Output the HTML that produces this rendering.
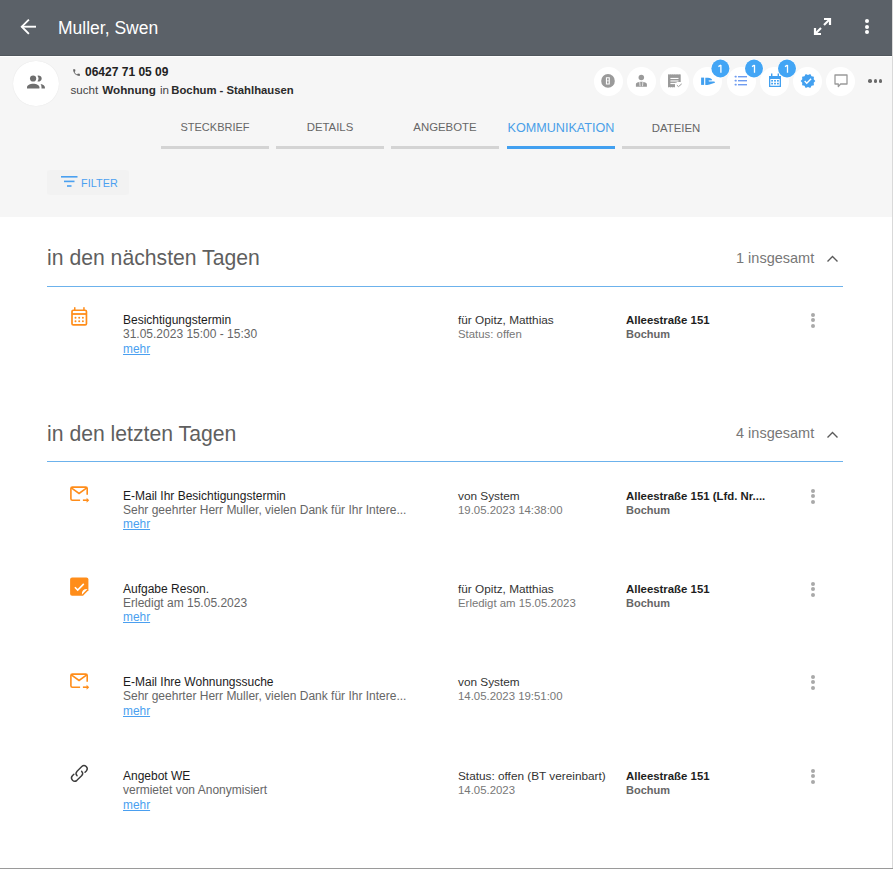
<!DOCTYPE html>
<html><head><meta charset="utf-8">
<style>
*{margin:0;padding:0;box-sizing:border-box}
html,body{width:893px;height:869px;overflow:hidden;background:#fff;font-family:"Liberation Sans",sans-serif}
#frame{position:absolute;left:0;top:0;width:892px;height:868px;background:#fff;overflow:hidden}
#rshadow{position:absolute;left:892px;top:0;width:1px;height:869px;background:#d9d9d9}
#bshadow{position:absolute;left:0;top:868px;width:893px;height:1px;background:#9a9a9a}
.a{position:absolute;white-space:nowrap;line-height:1}
svg{position:absolute;overflow:visible}
#hdr{position:absolute;left:0;top:0;width:892px;height:56px;background:#5b6168;border-bottom:1px solid #51575d}
#sub{position:absolute;left:0;top:57px;width:892px;height:160px;background:#f6f6f6}
#hline{position:absolute;left:0;top:56px;width:892px;height:1px;background:#fff}
.circ{position:absolute;width:29px;height:29px;border-radius:50%;background:#fff}
.badge{position:absolute;width:18px;height:18px;border-radius:50%;background:#42a0f0;color:#fff;font-size:11.5px;line-height:18px;text-align:center;box-shadow:0 0 0 1px rgba(255,255,255,.7)}
.tab{position:absolute;top:116px;width:108px;height:33px;text-align:center;color:#666;font-size:12px}
.tab .t{position:absolute;left:0;right:0;top:4px;line-height:14px}
.tab .u{position:absolute;left:0;right:0;bottom:0;height:3px;background:#d4d4d4}
.tab.act{color:#4a9fe8}
.tab.act .u{background:#42a0f0}
.h2{position:absolute;left:47px;font-size:21.2px;color:#5f5f5f;line-height:1}
.cnt{position:absolute;font-size:14.5px;color:#777;line-height:1}
.line{position:absolute;left:47px;width:796px;height:1px;background:#6cb2ec}
.ttl{position:absolute;left:123px;font-size:12px;color:#1c1c1c;line-height:1;white-space:nowrap}
.sub2{position:absolute;left:123px;font-size:12px;color:#666;line-height:1;white-space:nowrap}
.mehr{position:absolute;left:123px;font-size:11.9px;color:#4a9ff0;line-height:1;text-decoration:underline}
.c2{position:absolute;left:458px;font-size:11.8px;color:#333;line-height:1;white-space:nowrap}
.c2b{position:absolute;left:458px;font-size:11.4px;color:#777;line-height:1;white-space:nowrap}
.c3{position:absolute;left:626px;font-size:11.4px;color:#1e1e1e;font-weight:bold;line-height:1;white-space:nowrap}
.c3b{position:absolute;left:626px;font-size:11px;color:#666;font-weight:bold;line-height:1}
.kb{position:absolute;left:811px;width:4px;height:4px;border-radius:50%;background:#a9a9a9}
</style></head><body>
<div id="frame">
<div id="hdr"></div><div id="hline"></div><div id="sub"></div>
<svg style="left:14px;top:12px" width="28" height="30" viewBox="14 12 28 30"><g fill="none" stroke="#fff" stroke-width="1.9"><path d="M36 26.7H21.6"/><path d="M28.9 19.6L21.8 26.7L28.9 33.8"/></g></svg>
<div class="a" style="left:58px;top:20px;font-size:17.5px;color:#fff">Muller, Swen</div>
<svg style="left:810px;top:14px" width="25" height="25" viewBox="810 14 25 25"><g fill="none" stroke="#fff" stroke-width="2.2"><path d="M824 19H830V25"/><path d="M829.5 19.5L824 25"/><path d="M815 28V34H821"/><path d="M815.5 33.5L821 28"/></g></svg>
<div style="position:absolute;left:864.5px;top:19.1px;width:4px;height:4px;border-radius:50%;background:#fff"></div>
<div style="position:absolute;left:864.5px;top:24.7px;width:4px;height:4px;border-radius:50%;background:#fff"></div>
<div style="position:absolute;left:864.5px;top:30.3px;width:4px;height:4px;border-radius:50%;background:#fff"></div>
<div style="position:absolute;left:13px;top:60.5px;width:45.5px;height:45.5px;border-radius:50%;background:#fff;box-shadow:0 0 1px rgba(0,0,0,.12)"></div>
<svg style="left:22px;top:68px" width="28" height="28" viewBox="22 68 28 28"><g fill="#6e6e6e"><circle cx="33.1" cy="78.5" r="3.1"/><path d="M27 88.6V87.2C27 85.2 30.2 83.8 33.2 83.8S39.4 85.2 39.4 87.2V88.6Z"/><path d="M37.4 75.64A3.1 3.1 0 1 1 37.4 81.36A4.6 4.6 0 0 0 37.4 75.64Z"/><path d="M40.6 84C43.2 84.5 44.9 85.8 44.9 87.2V88.6H41.5V87.2C41.5 86 41.2 84.9 40.6 84Z"/></g></svg>
<svg style="left:72px;top:68px" width="9" height="9" viewBox="0 0 24 24"><path fill="#666" d="M6.62 10.79c1.44 2.83 3.76 5.14 6.59 6.59l2.2-2.2c.27-.27.67-.36 1.02-.24 1.12.37 2.33.57 3.57.57.55 0 1 .45 1 1V20c0 .55-.45 1-1 1-9.39 0-17-7.61-17-17 0-.55.45-1 1-1h3.5c.55 0 1 .45 1 1 0 1.25.2 2.45.57 3.57.11.35.03.74-.25 1.02l-2.2 2.2z"/></svg>
<div class="a" style="left:85px;top:66px;font-size:12px;color:#222;font-weight:bold">06427 71 05 09</div>
<div class="a" style="left:70.5px;top:84px;font-size:11.6px;color:#444">sucht<span style="display:inline-block;width:4px"></span><b style="font-size:11.7px;color:#2a2a2a">Wohnung</b><span style="display:inline-block;width:4px"></span>in<span style="display:inline-block;width:2.4px"></span><b style="font-size:11.3px;color:#2a2a2a">Bochum - Stahlhausen</b></div>
<div class="circ" style="left:593.50px;top:66.5px"></div>
<div class="circ" style="left:626.78px;top:66.5px"></div>
<div class="circ" style="left:660.06px;top:66.5px"></div>
<div class="circ" style="left:693.34px;top:66.5px"></div>
<div class="circ" style="left:726.62px;top:66.5px"></div>
<div class="circ" style="left:759.90px;top:66.5px"></div>
<div class="circ" style="left:793.18px;top:66.5px"></div>
<div class="circ" style="left:826.46px;top:66.5px"></div>
<svg style="left:598px;top:70px" width="20" height="22" viewBox="598 70 20 22"><circle cx="608" cy="80.9" r="6.8" fill="#9a9a9a"/><path fill="#fff" fill-rule="evenodd" d="M605.9 77.3H609.8V84.5H605.9Z M607 78.3V80.5H608.7V78.3Z M607 81.3V83.5H608.7V81.3Z"/></svg>
<svg style="left:630px;top:70px" width="24" height="22" viewBox="630 70 24 22"><circle cx="641.3" cy="77.4" r="2.75" fill="#9a9a9a"/><path fill="#9a9a9a" d="M635.9 86.8V84.3C635.9 83.2 637 82.5 638.2 82.2L640 81.7H642.6L644.4 82.2C645.6 82.5 646.9 83.2 646.9 84.3V86.8Z"/><path d="M639.7 81.8L640.1 86.2M642.9 81.8L642.5 86.2" stroke="#fff" stroke-width="0.75" fill="none"/></svg>
<svg style="left:664px;top:70px" width="24" height="22" viewBox="664 70 24 22"><g fill="#9a9a9a"><path d="M668 74.6L668.9 74.2L669.8 74.6L670.7 74.2L671.6 74.6L672.5 74.2L673.4 74.6L674.3 74.2L675.2 74.6L676.1 74.2L677 74.6L677.9 74.2L678.8 74.6L679.7 74.2L680.7 74.6V81.9H676.6V82.8H675V87L674.1 87.4L673.2 87L672.3 87.4L671.4 87L670.5 87.4L669.6 87L668.7 87.4L668 87Z"/></g><rect x="670.4" y="77.9" width="8.1" height="1.1" fill="#fff"/><rect x="670.4" y="80.1" width="8.1" height="1.7" fill="#dadada"/><rect x="670.4" y="82.9" width="4.6" height="1.2" fill="#fff"/><path d="M676.9 85.2L678.5 86.6L681.7 83.9" fill="none" stroke="#9a9a9a" stroke-width="1"/></svg>
<svg style="left:698px;top:74px" width="20" height="14" viewBox="698 74 20 14"><g fill="#42a0f0"><rect x="701.1" y="77.6" width="3" height="7.3"/><path d="M705.3 77.8H708C710 77.8 712.1 78.9 712.2 80.3L708.6 80.5L708.9 81.4H713.5C714.6 81.4 715.4 82.1 714.8 82.7L709.5 84.6C708.8 84.9 708 84.9 707.2 84.9H705.3Z"/></g></svg>
<svg style="left:734px;top:75px" width="14" height="12" viewBox="0 0 14 12"><g fill="#6f9cf0"><rect x="0.8" y="0.8" width="1.8" height="1.8" rx=".4"/><rect x="0.8" y="4.8" width="1.8" height="1.8" rx=".4"/><rect x="0.8" y="8.8" width="1.8" height="1.8" rx=".4"/><rect x="4" y="1" width="9" height="1.4"/><rect x="4" y="5" width="9" height="1.4"/><rect x="4" y="9" width="9" height="1.4"/></g></svg>
<svg style="left:768px;top:73px" width="14" height="15" viewBox="0 0 14 15"><g fill="#42a0f0"><rect x="3" y="0.5" width="1.4" height="2.5"/><rect x="9.6" y="0.5" width="1.4" height="2.5"/><path d="M1 3H13V14H1Z M2.3 6V12.7H11.7V6Z" fill-rule="evenodd"/><rect x="3.2" y="7" width="1.8" height="1.6"/><rect x="6.1" y="7" width="1.8" height="1.6"/><rect x="9" y="7" width="1.8" height="1.6"/><rect x="3.2" y="9.8" width="1.8" height="1.6"/><rect x="6.1" y="9.8" width="1.8" height="1.6"/><rect x="9" y="9.8" width="1.8" height="1.6"/></g></svg>
<svg style="left:800px;top:73px" width="16" height="16" viewBox="0 0 24 24"><path fill="#42a0f0" d="M23 12l-2.44-2.79.34-3.69-3.61-.82-1.89-3.2L12 2.96 8.6 1.5 6.71 4.69 3.1 5.5l.34 3.7L1 12l2.44 2.79-.34 3.7 3.61.82L8.6 22.5l3.4-1.47 3.4 1.46 1.89-3.19 3.61-.82-.34-3.69L23 12zm-12.91 4.72l-3.8-3.81 1.48-1.48 2.32 2.33 5.85-5.87 1.48 1.48-7.33 7.35z"/></svg>
<svg style="left:834px;top:74px" width="14" height="14" viewBox="0 0 14 14"><path d="M1 1H13V10H6.6L4.3 12.6V10H1Z" fill="none" stroke="#9a9a9a" stroke-width="1.3" stroke-linejoin="round"/></svg>
<div style="position:absolute;left:868.3px;top:79px;width:3.6px;height:3.6px;border-radius:50%;background:#6a6a6a"></div>
<div style="position:absolute;left:873.5px;top:79px;width:3.6px;height:3.6px;border-radius:50%;background:#6a6a6a"></div>
<div style="position:absolute;left:878.7px;top:79px;width:3.6px;height:3.6px;border-radius:50%;background:#6a6a6a"></div>
<svg style="left:709px;top:57px" width="22" height="23" viewBox="709 57 22 23"><circle cx="720.4" cy="68.5" r="9.6" fill="#fff" fill-opacity=".75"/><circle cx="720.4" cy="68.5" r="9" fill="#42a5f5"/><path d="M720.90 64.9V72.7M718.40 66.6L720.90 65" fill="none" stroke="#fff" stroke-width="1.3"/></svg>
<svg style="left:743px;top:57px" width="22" height="23" viewBox="743 57 22 23"><circle cx="754" cy="68.5" r="9.6" fill="#fff" fill-opacity=".75"/><circle cx="754" cy="68.5" r="9" fill="#42a5f5"/><path d="M754.50 64.9V72.7M752.00 66.6L754.50 65" fill="none" stroke="#fff" stroke-width="1.3"/></svg>
<svg style="left:776px;top:57px" width="22" height="23" viewBox="776 57 22 23"><circle cx="787" cy="68.5" r="9.6" fill="#fff" fill-opacity=".75"/><circle cx="787" cy="68.5" r="9" fill="#42a5f5"/><path d="M787.50 64.9V72.7M785.00 66.6L787.50 65" fill="none" stroke="#fff" stroke-width="1.3"/></svg>
<div class="tab" style="left:161px"><div class="t" style="font-size:11.0px;top:4px">STECKBRIEF</div><div class="u"></div></div>
<div class="tab" style="left:276px"><div class="t" style="font-size:11.4px;top:4px">DETAILS</div><div class="u"></div></div>
<div class="tab" style="left:391px"><div class="t" style="font-size:11.4px;top:4px">ANGEBOTE</div><div class="u"></div></div>
<div class="tab act" style="left:507px"><div class="t" style="font-size:12.6px;top:5px">KOMMUNIKATION</div><div class="u"></div></div>
<div class="tab" style="left:622px"><div class="t" style="font-size:11.4px;top:5px">DATEIEN</div><div class="u"></div></div>
<div style="position:absolute;left:47px;top:170px;width:82px;height:25px;border-radius:3px;background:#f2f2f2"></div>
<svg style="left:61px;top:176px" width="17" height="11" viewBox="0 0 17 11"><g fill="#4aa0f0"><rect x="0" y="0" width="16.5" height="1.6"/><rect x="3" y="4.6" width="10.5" height="1.6"/><rect x="6" y="9.2" width="4.5" height="1.6"/></g></svg>
<div class="a" style="left:81px;top:178px;font-size:10.8px;color:#4aa0f0;letter-spacing:0.1px">FILTER</div>
<div class="h2" style="top:247px">in den nächsten Tagen</div>
<div class="cnt" style="left:736px;top:251px">1 insgesamt</div>
<svg style="left:826px;top:253.5px" width="13" height="9" viewBox="0 0 13 9"><path d="M1.5 7.5L6.5 2.5L11.5 7.5" fill="none" stroke="#5a5a5a" stroke-width="1.4"/></svg>
<div class="line" style="top:286px"></div>
<svg style="left:66px;top:302px" width="26" height="28" viewBox="66 302 26 28"><g fill="none" stroke="#ff8d1a" stroke-width="1.7"><rect x="72" y="310.25" width="14.45" height="14.7" rx="1.3"/><path d="M72 314H86.45" stroke-width="1.8"/></g><g fill="#ff8d1a"><rect x="74" y="307.2" width="1.5" height="3"/><rect x="83.2" y="307.2" width="1.5" height="3"/><circle cx="75.5" cy="317.8" r="1"/><circle cx="79.2" cy="317.8" r="1"/><circle cx="82.9" cy="317.8" r="1"/><circle cx="75.5" cy="321.3" r="1"/><circle cx="79.2" cy="321.3" r="1"/><circle cx="82.9" cy="321.3" r="1"/></g></svg><div class="ttl" style="top:314px">Besichtigungstermin</div><div class="sub2" style="top:328px">31.05.2023 15:00 - 15:30</div><div class="mehr" style="top:344px">mehr</div><div class="c2" style="top:315px">für Opitz, Matthias</div><div class="c2b" style="top:329px">Status: offen</div><div class="c3" style="top:315px">Alleestraße 151</div><div class="c3b" style="top:329px">Bochum</div><div class="kb" style="top:312.6px"></div><div class="kb" style="top:318.2px"></div><div class="kb" style="top:323.8px"></div>
<div class="h2" style="top:423px">in den letzten Tagen</div>
<div class="cnt" style="left:736px;top:426px">4 insgesamt</div>
<svg style="left:826px;top:429.5px" width="13" height="9" viewBox="0 0 13 9"><path d="M1.5 7.5L6.5 2.5L11.5 7.5" fill="none" stroke="#5a5a5a" stroke-width="1.4"/></svg>
<div class="line" style="top:461px"></div>
<svg style="left:66px;top:482px" width="28" height="24" viewBox="66 482 28 24"><g fill="none" stroke="#ff8d1a" stroke-width="1.6"><path d="M80.1 500.20H72.4Q70.9 500.20 70.9 498.70V488.60Q70.9 487.10 72.4 487.10H85.7Q87.2 487.10 87.2 488.60V494.70"/><path d="M71.3 487.90L79.05 493.50L86.8 487.90"/><path d="M82.9 500.20H87"/></g><path d="M86.6 497.70L89.2 500.20L86.6 502.70Z" fill="#ff8d1a"/></svg><div class="ttl" style="top:490px">E-Mail Ihr Besichtigungstermin</div><div class="sub2" style="top:504px">Sehr geehrter Herr Muller, vielen Dank für Ihr Intere...</div><div class="mehr" style="top:519px">mehr</div><div class="c2" style="top:491px">von System</div><div class="c2b" style="top:505px">19.05.2023 14:38:00</div><div class="c3" style="top:491px">Alleestraße 151 (Lfd. Nr....</div><div class="c3b" style="top:505px">Bochum</div><div class="kb" style="top:488.6px"></div><div class="kb" style="top:494.2px"></div><div class="kb" style="top:499.8px"></div>
<svg style="left:62px;top:570px" width="36" height="35" viewBox="62 570 36 35"><path fill="#ff8d1a" d="M70.1 579.5Q70.1 577.5 72.1 577.5H86.4Q88.4 577.5 88.4 579.5V590.2L83 595.8H72.1Q70.1 595.8 70.1 593.8Z"/><path d="M74.9 587.2L77.7 590L83.8 583.9" fill="none" stroke="#fff" stroke-width="1.6"/><path d="M81.9 594.7Q81.3 589 87.5 589.1Z" fill="#fff"/></svg><div class="ttl" style="top:583px">Aufgabe Reson.</div><div class="sub2" style="top:597px">Erledigt am 15.05.2023</div><div class="mehr" style="top:612px">mehr</div><div class="c2" style="top:584px">für Opitz, Matthias</div><div class="c2b" style="top:598px">Erledigt am 15.05.2023</div><div class="c3" style="top:584px">Alleestraße 151</div><div class="c3b" style="top:598px">Bochum</div><div class="kb" style="top:581.6px"></div><div class="kb" style="top:587.2px"></div><div class="kb" style="top:592.8px"></div>
<svg style="left:66px;top:669px" width="28" height="24" viewBox="66 669 28 24"><g fill="none" stroke="#ff8d1a" stroke-width="1.6"><path d="M80.1 687.20H72.4Q70.9 687.20 70.9 685.70V675.60Q70.9 674.10 72.4 674.10H85.7Q87.2 674.10 87.2 675.60V681.70"/><path d="M71.3 674.90L79.05 680.50L86.8 674.90"/><path d="M82.9 687.20H87"/></g><path d="M86.6 684.70L89.2 687.20L86.6 689.70Z" fill="#ff8d1a"/></svg><div class="ttl" style="top:676px">E-Mail Ihre Wohnungssuche</div><div class="sub2" style="top:690px">Sehr geehrter Herr Muller, vielen Dank für Ihr Intere...</div><div class="mehr" style="top:706px">mehr</div><div class="c2" style="top:677px">von System</div><div class="c2b" style="top:691px">14.05.2023 19:51:00</div><div class="kb" style="top:674.6px"></div><div class="kb" style="top:680.2px"></div><div class="kb" style="top:685.8px"></div>
<svg style="left:62px;top:758px" width="36" height="32" viewBox="62 758 36 32"><g fill="none" stroke="#3c3c3c" stroke-width="1.4" stroke-linecap="round"><path d="M77.09 775.66A3.2 3.2 0 0 1 77.09 771.14L81.79 766.44A3.2 3.2 0 0 1 86.31 770.96L85.0 772.3"/><path d="M81.61 771.14A3.2 3.2 0 0 1 81.61 775.66L76.91 780.36A3.2 3.2 0 0 1 72.39 775.84L73.9 774.3"/></g></svg><div class="ttl" style="top:770px">Angebot WE</div><div class="sub2" style="top:784px">vermietet von Anonymisiert</div><div class="mehr" style="top:800px">mehr</div><div class="c2" style="top:771px">Status: offen (BT vereinbart)</div><div class="c2b" style="top:785px">14.05.2023</div><div class="c3" style="top:771px">Alleestraße 151</div><div class="c3b" style="top:785px">Bochum</div><div class="kb" style="top:768.6px"></div><div class="kb" style="top:774.2px"></div><div class="kb" style="top:779.8px"></div>
</div>
<div id="rshadow"></div>
<div id="bshadow"></div>
</body></html>
